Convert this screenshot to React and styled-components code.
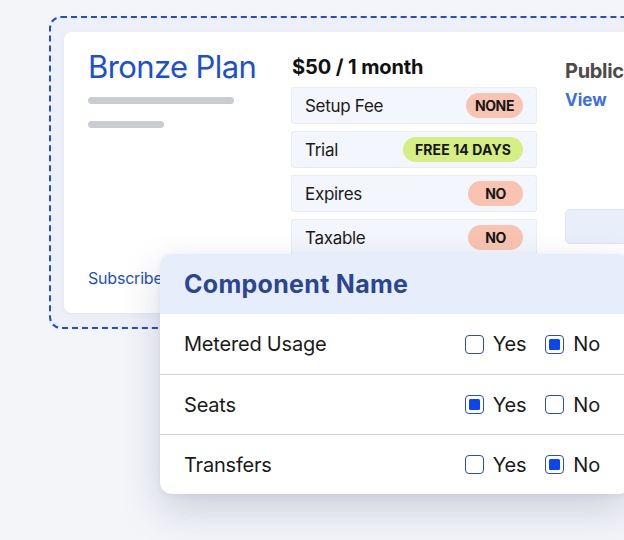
import React from "react";
import styled, { createGlobalStyle } from "styled-components";

const GlobalStyle = createGlobalStyle`
  html, body {
    margin: 0;
    padding: 0;
    background: #f4f5f9;
    font-family: Inter, "Noto Sans", sans-serif;
    overflow: hidden;
  }
`;

const Page = styled.div`
  position: relative;
  width: 624px;
  height: 540px;
  overflow: hidden;
  padding: 16px 0 0 49px;
  box-sizing: border-box;
`;

const Frame = styled.div`
  width: 640px;
  border: 2px dashed #1f4fd1;
  border-radius: 12px;
  background: #eef0f9;
  padding: 14px 13px;
  box-sizing: border-box;
`;

const Card = styled.div`
  display: grid;
  grid-template-columns: 175px 246px 1fr;
  column-gap: 28px;
  height: 281px;
  box-sizing: border-box;
  padding: 15px 0 25px 24px;
  background: #fff;
  border-radius: 8px;
  box-shadow: 0 2px 6px rgba(40, 50, 100, 0.05);
`;

const Column = styled.div`
  display: flex;
  flex-direction: column;
  min-width: 0;
`;

const Title = styled.h1`
  margin: 0;
  font-size: 31px;
  font-weight: 400;
  line-height: 40px;
  letter-spacing: -0.6px;
  color: #1a4fd6;
  white-space: nowrap;
`;

const Bar = styled.div`
  width: ${(p) => p.w}px;
  height: 7px;
  border-radius: 4px;
  background: #c9cdd2;
  margin-top: ${(p) => p.mt}px;
`;

const Subscribe = styled.a`
  margin-top: auto;
  font-size: 16px;
  line-height: 20px;
  color: #2150cc;
  letter-spacing: -0.2px;
`;

const Price = styled.div`
  font-size: 20px;
  font-weight: 700;
  line-height: 26px;
  letter-spacing: -0.1px;
  color: #111;
  margin: 7px 0 7px 1px;
`;

const Rows = styled.div`
  display: flex;
  flex-direction: column;
  gap: 7px;
`;

const Row = styled.div`
  display: flex;
  align-items: center;
  justify-content: space-between;
  height: 37px;
  box-sizing: border-box;
  padding: 0 13px;
  background: #f3f6fc;
  border: 1px solid #e8ecf5;
  border-radius: 3px;
  font-size: 17px;
  letter-spacing: -0.3px;
  color: #1a1a1a;
`;

const Badge = styled.span`
  height: 25px;
  line-height: 25px;
  padding: 0 ${(p) => (p.green ? 12 : 9)}px;
  border-radius: 13px;
  font-size: 14px;
  font-weight: 700;
  letter-spacing: ${(p) => (p.green ? 0.1 : -0.4)}px;
  color: #161616;
  background: ${(p) => (p.green ? "#d5ef85" : "#f8c4b1")};
  min-width: 55px;
  box-sizing: border-box;
  text-align: center;
`;

const SideTitle = styled.div`
  margin-top: 11px;
  font-size: 20px;
  font-weight: 700;
  line-height: 26px;
  letter-spacing: -0.3px;
  color: #4b4b4b;
`;

const ViewLink = styled.a`
  margin-top: 5px;
  font-size: 17px;
  font-weight: 700;
  color: #3d70dd;
  line-height: 22px;
`;

const GhostBox = styled.div`
  margin-top: 98px;
  height: 33px;
  border-radius: 5px;
  background: #e9eefb;
  border: 1px solid #dde4f5;
`;

const Panel = styled.div`
  position: absolute;
  left: 160px;
  top: 254px;
  width: 470px;
  background: #fff;
  border-radius: 12px;
  overflow: hidden;
  box-shadow: 0 16px 40px rgba(30, 40, 90, 0.18), 0 2px 6px rgba(30, 40, 90, 0.06);
`;

const PanelHeader = styled.div`
  height: 60px;
  display: flex;
  align-items: center;
  padding-left: 24px;
  background: #e6eefb;
  font-size: 25px;
  font-weight: 700;
  letter-spacing: 0.3px;
  color: #2b4591;
`;

const OptionRow = styled.div`
  height: 60px;
  box-sizing: border-box;
  display: flex;
  align-items: center;
  justify-content: space-between;
  padding: 0 30px 0 24px;
  border-top: ${(p) => (p.first ? "none" : "1px solid #d3d4d8")};
  font-size: 20px;
  letter-spacing: -0.2px;
  color: #1a1a1a;
`;

const Choices = styled.div`
  display: flex;
  align-items: center;
  gap: 19px;
`;

const Choice = styled.label`
  display: flex;
  align-items: center;
  gap: 9px;
`;

const Box = styled.span`
  width: 19px;
  height: 19px;
  box-sizing: border-box;
  border: 1.5px solid #2a4fb0;
  border-radius: 4px;
  display: flex;
  align-items: center;
  justify-content: center;
  &::after {
    content: "";
    width: 11px;
    height: 11px;
    border-radius: 1.5px;
    background: ${(p) => (p.checked ? "#0a45f2" : "transparent")};
  }
`;

const fees = [
  { label: "Setup Fee", value: "NONE" },
  { label: "Trial", value: "FREE 14 DAYS", green: true },
  { label: "Expires", value: "NO" },
  { label: "Taxable", value: "NO" },
];

const options = [
  { label: "Metered Usage", yes: false },
  { label: "Seats", yes: true },
  { label: "Transfers", yes: false },
];

export default function App() {
  return (
    <Page>
      <GlobalStyle />
      <Frame>
        <Card>
          <Column>
            <Title>Bronze Plan</Title>
            <Bar w={146} mt={10} />
            <Bar w={76} mt={17} />
            <Subscribe>Subscribe</Subscribe>
          </Column>
          <Column>
            <Price>$50 / 1 month</Price>
            <Rows>
              {fees.map((f) => (
                <Row key={f.label}>
                  <span>{f.label}</span>
                  <Badge green={f.green}>{f.value}</Badge>
                </Row>
              ))}
            </Rows>
          </Column>
          <Column>
            <SideTitle>Public</SideTitle>
            <ViewLink>View</ViewLink>
            <GhostBox />
          </Column>
        </Card>
      </Frame>
      <Panel>
        <PanelHeader>Component Name</PanelHeader>
        {options.map((o, i) => (
          <OptionRow key={o.label} first={i === 0}>
            <span>{o.label}</span>
            <Choices>
              <Choice>
                <Box checked={o.yes} />
                Yes
              </Choice>
              <Choice>
                <Box checked={!o.yes} />
                No
              </Choice>
            </Choices>
          </OptionRow>
        ))}
      </Panel>
    </Page>
  );
}
